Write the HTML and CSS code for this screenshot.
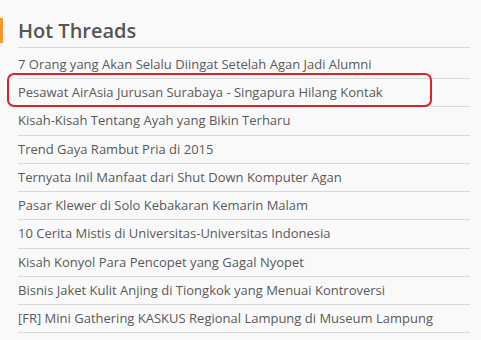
FILE: index.html
```
<!DOCTYPE html>
<html>
<head>
<meta charset="utf-8">
<link rel="stylesheet" href="styles.css">
</head>
<body>
<div class="panel">
  <div class="header">
    <span class="bar"></span>
    <h2 class="title">Hot Threads</h2>
  </div>
  <ul class="threads">
    <li class="thread">7 Orang yang Akan Selalu Diingat Setelah Agan Jadi Alumni</li>
    <li class="thread">Pesawat AirAsia Jurusan Surabaya - Singapura Hilang Kontak</li>
    <li class="thread">Kisah-Kisah Tentang Ayah yang Bikin Terharu</li>
    <li class="thread">Trend Gaya Rambut Pria di 2015</li>
    <li class="thread">Ternyata Inil Manfaat dari Shut Down Komputer Agan</li>
    <li class="thread">Pasar Klewer di Solo Kebakaran Kemarin Malam</li>
    <li class="thread">10 Cerita Mistis di Universitas-Universitas Indonesia</li>
    <li class="thread">Kisah Konyol Para Pencopet yang Gagal Nyopet</li>
    <li class="thread">Bisnis Jaket Kulit Anjing di Tiongkok yang Menuai Kontroversi</li>
    <li class="thread">[FR] Mini Gathering KASKUS Regional Lampung di Museum Lampung</li>
  </ul>
  <div class="highlight"></div>
</div>
</body>
</html>
```
FILE: styles.css
```
html, body {
  margin: 0;
  padding: 0;
  background: #f9f9f9;
}
body {
  width: 481px;
  height: 340px;
  overflow: hidden;
  font-family: "Open Sans", "Liberation Sans", sans-serif;
  color: #585858;
}
.panel {
  position: relative;
  width: 470px;
  padding-top: 2px;
}
.header {
  display: flex;
  align-items: flex-start;
}
.bar {
  flex: none;
  width: 3px;
  height: 25px;
  margin-top: 16px;
  background: #f29a2e;
}
.title {
  flex: 1;
  margin: 15px 0 0 15px;
  padding: 0 0 2px 0;
  height: 28px;
  font-size: 20px;
  line-height: 28px;
  font-weight: 600;
  color: #555;
  border-bottom: 1px solid #d8d8d8;
}
.threads {
  list-style: none;
  margin: 0 0 0 18px;
  padding: 3px 0 0 0;
}
.thread {
  height: 27.22px;
  line-height: 27px;
  font-size: 13px;
  color: #5a5a5a;
  border-bottom: 1px solid #d8d8d8;
  white-space: nowrap;
}
.highlight {
  position: absolute;
  left: 7px;
  top: 73px;
  width: 421px;
  height: 30px;
  border: 2px solid #d8232a;
  border-radius: 7px;
}
```
